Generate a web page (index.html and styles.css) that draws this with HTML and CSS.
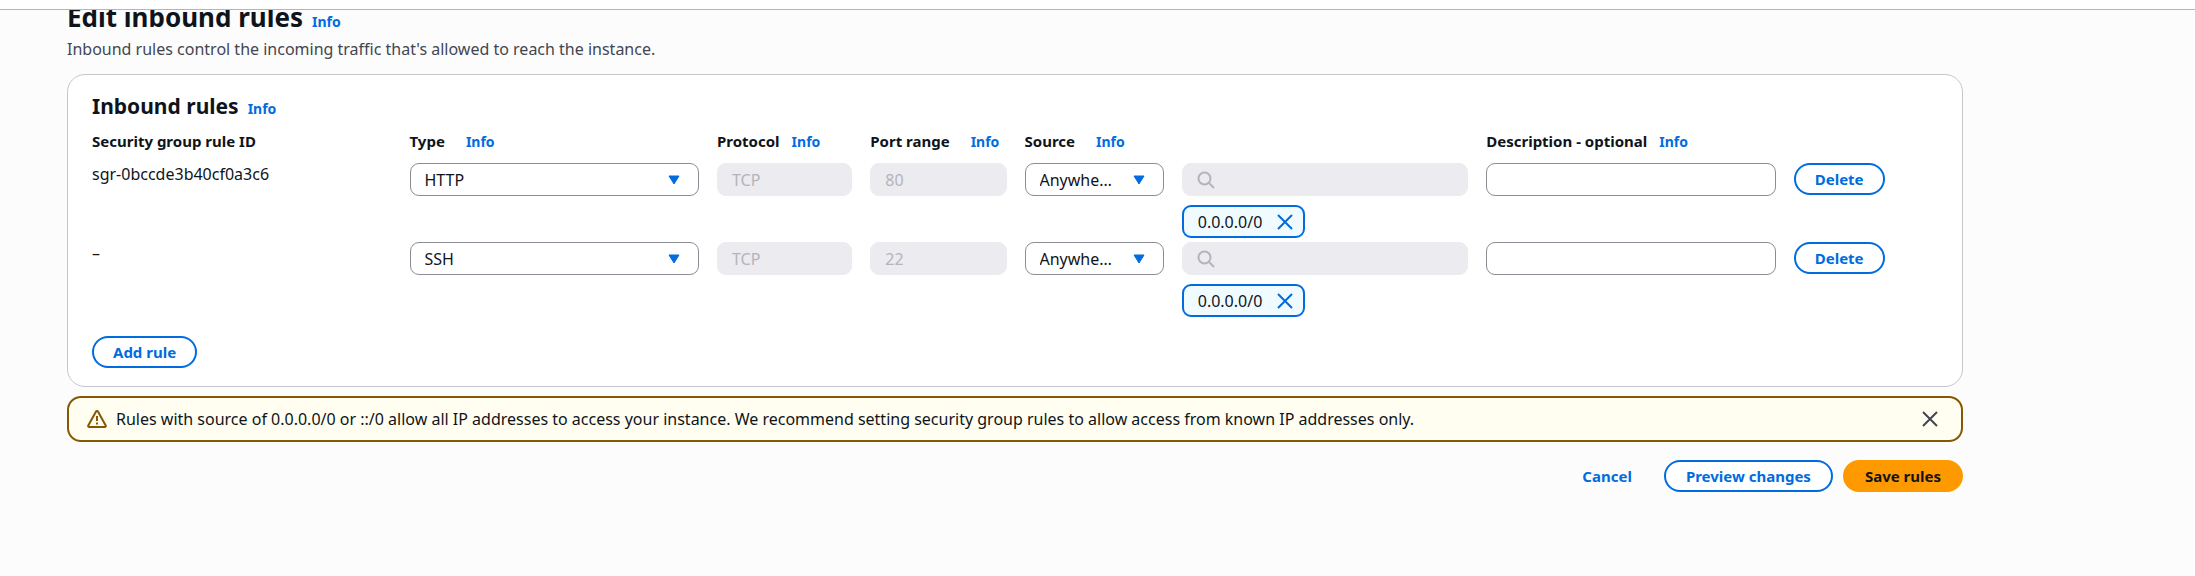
FILE: index.html
```html
<!DOCTYPE html>
<html lang="en">
<head>
<meta charset="utf-8">
<title>Edit inbound rules</title>
<link rel="stylesheet" href="styles.css">
</head>
<body>
<header class="topbar"></header>
<main class="page">
  <div class="page-title">
    <h1>Edit inbound rules</h1>
    <a class="info" href="#">Info</a>
  </div>
  <p class="lead">Inbound rules control the incoming traffic that's allowed to reach the instance.</p>

  <section class="panel">
    <div class="panel-title">
      <h2>Inbound rules</h2>
      <a class="info" href="#">Info</a>
    </div>
    <table class="rules">
      <thead>
        <tr>
          <th>Security group rule ID</th>
          <th class="wide">Type <a class="info" href="#">Info</a></th>
          <th>Protocol <a class="info" href="#">Info</a></th>
          <th class="wide">Port range <a class="info" href="#">Info</a></th>
          <th class="wide source" colspan="2">Source <a class="info" href="#">Info</a></th>
          <th>Description - optional <a class="info" href="#">Info</a></th>
          <th></th>
        </tr>
      </thead>
      <tbody>
        <tr>
          <td class="rule-id">sgr-0bccde3b40cf0a3c6</td>
          <td><div class="select"><select aria-label="Type"><option>HTTP</option></select><svg class="caret" viewBox="0 0 12 10"><path d="M1 1h10L6 9z"/></svg></div></td>
          <td><input class="field" type="text" aria-label="Protocol" value="TCP" disabled></td>
          <td><input class="field" type="text" aria-label="Port range" value="80" disabled></td>
          <td><div class="select"><select aria-label="Source"><option>Anywhere-IPv4</option></select><svg class="caret" viewBox="0 0 12 10"><path d="M1 1h10L6 9z"/></svg></div></td>
          <td>
            <div class="search"><svg viewBox="0 0 18 18"><circle cx="7.5" cy="7.5" r="6"/><path d="M12 12l5 5"/></svg><input class="field" type="text" aria-label="Search source" disabled></div>
            <div class="chip"><span>0.0.0.0/0</span><button type="button" aria-label="Remove 0.0.0.0/0"><svg viewBox="0 0 16 16"><path d="M1 1l14 14M15 1L1 15"/></svg></button></div>
          </td>
          <td><input class="field" type="text" aria-label="Description"></td>
          <td><button class="btn" type="button">Delete</button></td>
        </tr>
        <tr>
          <td class="rule-id">–</td>
          <td><div class="select"><select aria-label="Type"><option>SSH</option></select><svg class="caret" viewBox="0 0 12 10"><path d="M1 1h10L6 9z"/></svg></div></td>
          <td><input class="field" type="text" aria-label="Protocol" value="TCP" disabled></td>
          <td><input class="field" type="text" aria-label="Port range" value="22" disabled></td>
          <td><div class="select"><select aria-label="Source"><option>Anywhere-IPv4</option></select><svg class="caret" viewBox="0 0 12 10"><path d="M1 1h10L6 9z"/></svg></div></td>
          <td>
            <div class="search"><svg viewBox="0 0 18 18"><circle cx="7.5" cy="7.5" r="6"/><path d="M12 12l5 5"/></svg><input class="field" type="text" aria-label="Search source" disabled></div>
            <div class="chip"><span>0.0.0.0/0</span><button type="button" aria-label="Remove 0.0.0.0/0"><svg viewBox="0 0 16 16"><path d="M1 1l14 14M15 1L1 15"/></svg></button></div>
          </td>
          <td><input class="field" type="text" aria-label="Description"></td>
          <td><button class="btn" type="button">Delete</button></td>
        </tr>
      </tbody>
    </table>
    <button class="btn" type="button">Add rule</button>
  </section>

  <div class="alert" role="alert">
    <svg class="warn" viewBox="0 0 20 18"><path d="M8.900 1.700a1.250 1.250 0 0 1 2.200 0L18.700 15.500a1 1 0 0 1-.9 1.500H2.200a1 1 0 0 1-.9-1.500z"/><path d="M10 6v5M10 12.600v2"/></svg>
    <p>Rules with source of 0.0.0.0/0 or ::/0 allow all IP addresses to access your instance. We recommend setting security group rules to allow access from known IP addresses only.</p>
    <button class="dismiss" type="button" aria-label="Dismiss"><svg viewBox="0 0 16 16"><path d="M1 1l14 14M15 1L1 15"/></svg></button>
  </div>

  <div class="actions">
    <button class="btn link" type="button">Cancel</button>
    <button class="btn" type="button">Preview changes</button>
    <button class="btn primary" type="button">Save rules</button>
  </div>
</main>
</body>
</html>
```

FILE: styles.css
```css
* { box-sizing: border-box; }

body {
  margin: 0;
  background: #fcfcfd;
  color: #0f141a;
  font: 16px/22px "Noto Sans", "Open Sans", sans-serif;
}

h1, h2, p { margin: 0; }

button, input, select { font: inherit; color: inherit; }

svg { display: block; fill: none; }

.topbar {
  height: 10px;
  background: #fff;
  border-bottom: 1px solid #b4b4bb;
}

.page {
  overflow: hidden;
  padding: 0 232px 24px 67px;
}

.page-title, .panel-title {
  display: flex;
  align-items: baseline;
  gap: 9px;
}

.page-title { margin-top: -9px; }

h1 { font-size: 26px; line-height: 32px; }

h2 { font-size: 21px; line-height: 26px; }

.info {
  color: #006ce0;
  font-size: 14px;
  font-weight: 700;
  text-decoration: none;
}

.lead {
  margin: 5px 0 14px;
  color: #424650;
}

.panel {
  padding: 18px 24px;
  background: #fff;
  border: 1px solid #c6c6cd;
  border-radius: 18px;
}

.rules {
  display: block;
  margin: 10px 0 19px;
}

.rules thead, .rules tbody { display: block; }

.rules tr {
  display: grid;
  grid-template-columns: 299fr 289fr 135fr 136fr 139fr 286fr 289fr 144fr;
  column-gap: 18px;
}

.rules th, .rules td {
  min-width: 0;
  padding: 0;
  text-align: left;
}

.rules thead { margin-bottom: 10px; }

.rules th {
  display: flex;
  align-items: baseline;
  gap: 12px;
  font-size: 15px;
  white-space: nowrap;
}

.rules .wide { gap: 21px; }

.rules .source { grid-column: span 2; }

.rules tbody tr + tr { margin-top: 4px; }

.rules tbody tr { min-height: 75px; }

.rule-id { line-height: 22px; }

.field, .select select {
  display: block;
  width: 100%;
  height: 33px;
  padding: 0 14px;
  background: #fff;
  border: 1px solid #8c8c94;
  border-radius: 9px;
}

.field:disabled {
  background: #ebebf0;
  border-color: #ebebf0;
  color: #b4b4bb;
}

.select, .search {
  display: grid;
  align-items: center;
}

.select > *, .search > * { grid-area: 1 / 1; }

.select select {
  appearance: none;
  padding-right: 46px;
  overflow: hidden;
  text-overflow: ellipsis;
  white-space: nowrap;
}

.caret {
  width: 12px;
  height: 10px;
  margin-right: 19px;
  justify-self: end;
  pointer-events: none;
  fill: #006ce0;
  stroke: #006ce0;
  stroke-width: 1;
  stroke-linejoin: round;
}

.search svg {
  z-index: 1;
  width: 18px;
  height: 18px;
  margin-left: 15px;
  stroke: #b4b4bb;
  stroke-width: 2;
}

.chip {
  display: inline-flex;
  align-items: center;
  gap: 15px;
  height: 33px;
  margin-top: 9px;
  padding: 0 10px 0 14px;
  vertical-align: top;
  background: #f0fbff;
  border: 2px solid #006ce0;
  border-radius: 9px;
}

.chip button, .dismiss {
  padding: 0;
  background: none;
  border: 0;
  stroke: #006ce0;
  stroke-width: 2;
}

.chip button svg, .dismiss svg { width: 16px; height: 16px; }

.btn {
  height: 32px;
  padding: 0 19px;
  background: #fff;
  border: 2px solid #006ce0;
  border-radius: 16px;
  color: #006ce0;
  font-size: 15px;
  font-weight: 700;
  line-height: 26px;
  white-space: nowrap;
}

.alert {
  display: flex;
  align-items: center;
  gap: 9px;
  margin: 9px 0 18px;
  padding: 10px 23px 10px 18px;
  background: #fffef0;
  border: 2px solid #855900;
  border-radius: 14px;
}

.alert p { flex: 1; line-height: 22px; }

.warn {
  width: 20px;
  height: 18px;
  stroke: #855900;
  stroke-width: 2;
}

.dismiss { stroke: #424650; }

.actions {
  display: flex;
  justify-content: flex-end;
  gap: 10px;
}

.btn.link {
  background: none;
  border-color: transparent;
}

.btn.primary {
  background: #ff9900;
  border-color: #ff9900;
  color: #0f141a;
}

.actions .btn { padding: 0 20px; }
```
